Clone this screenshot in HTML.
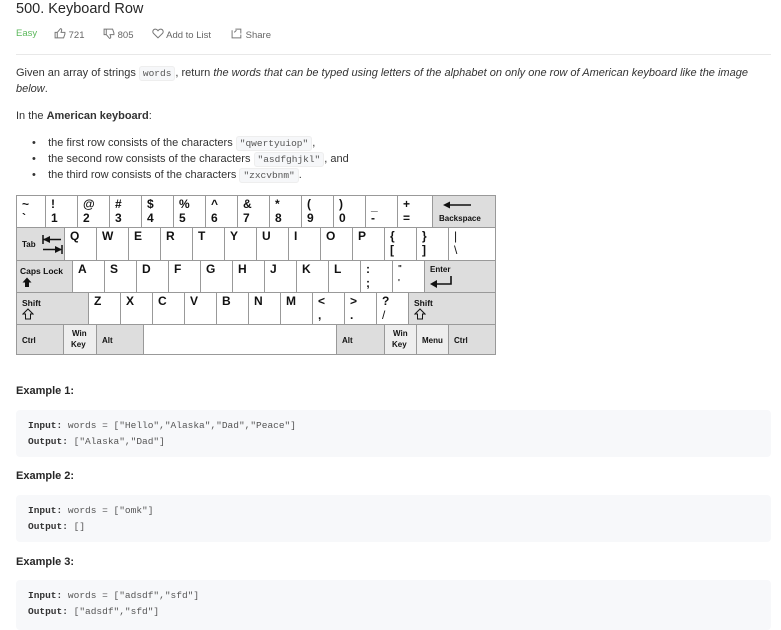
<!DOCTYPE html>
<html><head><meta charset="utf-8">
<style>
*{margin:0;padding:0;box-sizing:border-box}
body{width:781px;height:624px;overflow:hidden;background:#fff;font-family:"Liberation Sans","DejaVu Sans",sans-serif;color:#262626;position:relative}
.a{position:absolute;white-space:nowrap}
.t{font-size:11px;color:#333}
code{font-family:"Liberation Mono",monospace;font-size:9.5px;background:#f6f7f9;border:1px solid #eee;border-radius:3px;padding:1px 3px;color:#555}
.kb{position:absolute;left:16px;top:195px;width:480px;height:160px;background:#fff;border-top:1px solid #999;border-left:1px solid #999}
.k{position:absolute;border-right:1px solid #999;border-bottom:1px solid #999;background:#fff;font-family:"Liberation Sans",sans-serif;font-weight:bold;font-size:12px;color:#111;line-height:12px}
.g{background:#ddd}
.lg{background:#eee}
.k span{position:absolute;left:5px}
.u{top:2px}.d{top:16px}
.s{font-size:8px}
.code{position:absolute;left:16px;width:755px;background:#f7f8fa;border-radius:4px;font-family:"Liberation Mono",monospace;font-size:9.5px;color:#555;line-height:16px;padding:8px 12px}
.code b{color:#333}
.h{position:absolute;left:16px;font-size:11px;font-weight:bold;color:#262626}
.m{font-size:9.5px;color:#666;top:28px}
</style></head><body>
<div class="a" style="left:16px;top:1px;font-size:14.5px;color:#262626">500. Keyboard Row</div>
<div class="a m" style="left:16px;color:#5cb85c">Easy</div>
<div class="a m" style="left:54px">
<svg width="12" height="11" viewBox="0 0 11 10" style="vertical-align:-1px"><path d="M1 4h2v5H1zM3 4l3-3.5c1 0 1.2.8 1 1.8L6.5 4H10v1.5L8.8 9H3" fill="none" stroke="#777" stroke-width=".9"/></svg> 721</div>
<div class="a m" style="left:103px">
<svg width="12" height="11" viewBox="0 0 11 10" style="vertical-align:-1px"><path d="M1 1h2v5H1zM3 6l3 3.5c1 0 1.2-.8 1-1.8L6.5 6H10V4.5L8.8 1H3" fill="none" stroke="#777" stroke-width=".9"/></svg> 805</div>
<div class="a m" style="left:152px">
<svg width="12" height="11" viewBox="0 0 11 10" style="vertical-align:-1px"><path d="M5.5 9L1.5 5C0 3.5 1 1 3 1c1.2 0 2 .8 2.5 1.5C6 1.8 6.8 1 8 1c2 0 3 2.5 1.5 4z" fill="none" stroke="#777" stroke-width=".9"/></svg> Add to List</div>
<div class="a m" style="left:231px">
<svg width="12" height="11" viewBox="0 0 11 10" style="vertical-align:-1px"><path d="M1 2v7h8V6M4 1h5v4M3 4l2-2" fill="none" stroke="#777" stroke-width=".9"/></svg> Share</div>
<div class="a" style="left:16px;top:54px;width:755px;height:1px;background:#e8e8e8"></div>

<div class="a t" style="left:16px;top:67px">Given an array of strings <code>words</code>, return <i>the words that can be typed using letters of the alphabet on only one row of American keyboard like the image</i></div>
<div class="a t" style="left:16px;top:83px"><i>below</i>.</div>
<div class="a t" style="left:16px;top:110px">In the <b>American keyboard</b>:</div>
<div class="a t" style="left:32px;top:137px">•&nbsp;&nbsp;&nbsp; the first row consists of the characters <code>"qwertyuiop"</code>,</div>
<div class="a t" style="left:32px;top:153px">•&nbsp;&nbsp;&nbsp; the second row consists of the characters <code>"asdfghjkl"</code>, and</div>
<div class="a t" style="left:32px;top:169px">•&nbsp;&nbsp;&nbsp; the third row consists of the characters <code>"zxcvbnm"</code>.</div>

<div class="kb">
<div class="k" style="left:0;top:0;width:29px;height:32px"><span class="u">~</span><span class="d">`</span></div>
<div class="k" style="left:29px;top:0;width:32px;height:32px"><span class="u">!</span><span class="d">1</span></div>
<div class="k" style="left:61px;top:0;width:32px;height:32px"><span class="u">@</span><span class="d">2</span></div>
<div class="k" style="left:93px;top:0;width:32px;height:32px"><span class="u">#</span><span class="d">3</span></div>
<div class="k" style="left:125px;top:0;width:32px;height:32px"><span class="u">$</span><span class="d">4</span></div>
<div class="k" style="left:157px;top:0;width:32px;height:32px"><span class="u">%</span><span class="d">5</span></div>
<div class="k" style="left:189px;top:0;width:32px;height:32px"><span class="u">^</span><span class="d">6</span></div>
<div class="k" style="left:221px;top:0;width:32px;height:32px"><span class="u">&amp;</span><span class="d">7</span></div>
<div class="k" style="left:253px;top:0;width:32px;height:32px"><span class="u">*</span><span class="d">8</span></div>
<div class="k" style="left:285px;top:0;width:32px;height:32px"><span class="u">(</span><span class="d">9</span></div>
<div class="k" style="left:317px;top:0;width:32px;height:32px"><span class="u">)</span><span class="d">0</span></div>
<div class="k" style="left:349px;top:0;width:32px;height:32px"><span class="u" style="top:4px">_</span><span class="d">-</span></div>
<div class="k" style="left:381px;top:0;width:35px;height:32px"><span class="u">+</span><span class="d">=</span></div>
<div class="k g" style="left:416px;top:0;width:63px;height:32px"><svg style="position:absolute;left:10px;top:5px" width="30" height="8"><path d="M2 4H28" stroke="#111" stroke-width="1.6"/><path d="M0 4l7-3.5v7z" fill="#111"/></svg><span class="s" style="top:17px;left:6px">Backspace</span></div>

<div class="k g" style="left:0;top:32px;width:48px;height:33px"><span class="s" style="top:11px">Tab</span><svg style="position:absolute;left:24px;top:5px" width="24" height="22"><path d="M2 2v9M2 6.5H20" stroke="#111" stroke-width="1.5"/><path d="M2 6.5l7-3.5v7z" fill="#111"/><path d="M21 12v9M2 16.5H20" stroke="#111" stroke-width="1.5"/><path d="M21 16.5l-7-3.5v7z" fill="#111"/></svg></div>
<div class="k" style="left:48px;top:32px;width:32px;height:33px"><span class="u">Q</span></div>
<div class="k" style="left:80px;top:32px;width:32px;height:33px"><span class="u">W</span></div>
<div class="k" style="left:112px;top:32px;width:32px;height:33px"><span class="u">E</span></div>
<div class="k" style="left:144px;top:32px;width:32px;height:33px"><span class="u">R</span></div>
<div class="k" style="left:176px;top:32px;width:32px;height:33px"><span class="u">T</span></div>
<div class="k" style="left:208px;top:32px;width:32px;height:33px"><span class="u">Y</span></div>
<div class="k" style="left:240px;top:32px;width:32px;height:33px"><span class="u">U</span></div>
<div class="k" style="left:272px;top:32px;width:32px;height:33px"><span class="u">I</span></div>
<div class="k" style="left:304px;top:32px;width:32px;height:33px"><span class="u">O</span></div>
<div class="k" style="left:336px;top:32px;width:32px;height:33px"><span class="u">P</span></div>
<div class="k" style="left:368px;top:32px;width:32px;height:33px"><span class="u">{</span><span class="d">[</span></div>
<div class="k" style="left:400px;top:32px;width:32px;height:33px"><span class="u">}</span><span class="d">]</span></div>
<div class="k" style="left:432px;top:32px;width:47px;height:33px"><span class="u" style="font-weight:normal">|</span><span class="d" style="font-weight:normal">\</span></div>

<div class="k g" style="left:0;top:65px;width:56px;height:32px"><span class="s" style="top:4px;left:3px;font-size:8.5px">Caps Lock</span><svg style="position:absolute;left:5px;top:16px" width="10" height="11"><path d="M5 0.5L9.5 5.5H7V10H3V5.5H0.5z" fill="#111"/></svg></div>
<div class="k" style="left:56px;top:65px;width:32px;height:32px"><span class="u">A</span></div>
<div class="k" style="left:88px;top:65px;width:32px;height:32px"><span class="u">S</span></div>
<div class="k" style="left:120px;top:65px;width:32px;height:32px"><span class="u">D</span></div>
<div class="k" style="left:152px;top:65px;width:32px;height:32px"><span class="u">F</span></div>
<div class="k" style="left:184px;top:65px;width:32px;height:32px"><span class="u">G</span></div>
<div class="k" style="left:216px;top:65px;width:32px;height:32px"><span class="u">H</span></div>
<div class="k" style="left:248px;top:65px;width:32px;height:32px"><span class="u">J</span></div>
<div class="k" style="left:280px;top:65px;width:32px;height:32px"><span class="u">K</span></div>
<div class="k" style="left:312px;top:65px;width:32px;height:32px"><span class="u">L</span></div>
<div class="k" style="left:344px;top:65px;width:32px;height:32px"><span class="u">:</span><span class="d">;</span></div>
<div class="k" style="left:376px;top:65px;width:32px;height:32px"><span class="u s">"</span><span class="d s">'</span></div>
<div class="k g" style="left:408px;top:65px;width:71px;height:32px"><span class="s" style="top:3px">Enter</span><svg style="position:absolute;left:5px;top:14px" width="24" height="14"><path d="M21 1v8H4" stroke="#111" stroke-width="1.6" fill="none"/><path d="M0 9l7-4v8z" fill="#111"/></svg></div>

<div class="k g" style="left:0;top:97px;width:72px;height:32px"><span class="s" style="top:4px;font-size:8.5px">Shift</span><svg style="position:absolute;left:5px;top:15px" width="12" height="12"><path d="M6 1L11 6H8.5V11H3.5V6H1z" fill="none" stroke="#111" stroke-width="1"/></svg></div>
<div class="k" style="left:72px;top:97px;width:32px;height:32px"><span class="u">Z</span></div>
<div class="k" style="left:104px;top:97px;width:32px;height:32px"><span class="u">X</span></div>
<div class="k" style="left:136px;top:97px;width:32px;height:32px"><span class="u">C</span></div>
<div class="k" style="left:168px;top:97px;width:32px;height:32px"><span class="u">V</span></div>
<div class="k" style="left:200px;top:97px;width:32px;height:32px"><span class="u">B</span></div>
<div class="k" style="left:232px;top:97px;width:32px;height:32px"><span class="u">N</span></div>
<div class="k" style="left:264px;top:97px;width:32px;height:32px"><span class="u">M</span></div>
<div class="k" style="left:296px;top:97px;width:32px;height:32px"><span class="u">&lt;</span><span class="d">,</span></div>
<div class="k" style="left:328px;top:97px;width:32px;height:32px"><span class="u">&gt;</span><span class="d">.</span></div>
<div class="k" style="left:360px;top:97px;width:32px;height:32px"><span class="u">?</span><span class="d" style="font-weight:normal">/</span></div>
<div class="k g" style="left:392px;top:97px;width:87px;height:32px"><span class="s" style="top:4px;font-size:8.5px">Shift</span><svg style="position:absolute;left:5px;top:15px" width="12" height="12"><path d="M6 1L11 6H8.5V11H3.5V6H1z" fill="none" stroke="#111" stroke-width="1"/></svg></div>

<div class="k g" style="left:0;top:129px;width:47px;height:30px"><span class="s" style="top:10px">Ctrl</span></div>
<div class="k lg" style="left:47px;top:129px;width:33px;height:30px"><span class="s" style="top:3px;left:8px">Win</span><span class="s" style="top:14px;left:7px">Key</span></div>
<div class="k g" style="left:80px;top:129px;width:47px;height:30px"><span class="s" style="top:10px">Alt</span></div>
<div class="k" style="left:127px;top:129px;width:193px;height:30px"></div>
<div class="k g" style="left:320px;top:129px;width:48px;height:30px"><span class="s" style="top:10px">Alt</span></div>
<div class="k lg" style="left:368px;top:129px;width:32px;height:30px"><span class="s" style="top:3px;left:8px">Win</span><span class="s" style="top:14px;left:7px">Key</span></div>
<div class="k lg" style="left:400px;top:129px;width:32px;height:30px"><span class="s" style="top:10px">Menu</span></div>
<div class="k g" style="left:432px;top:129px;width:47px;height:30px"><span class="s" style="top:10px">Ctrl</span></div>
</div>

<div class="h" style="top:385px">Example 1:</div>
<div class="code" style="top:410px;height:47px"><b>Input:</b> words = ["Hello","Alaska","Dad","Peace"]<br><b>Output:</b> ["Alaska","Dad"]</div>
<div class="h" style="top:470px">Example 2:</div>
<div class="code" style="top:495px;height:47px"><b>Input:</b> words = ["omk"]<br><b>Output:</b> []</div>
<div class="h" style="top:556px">Example 3:</div>
<div class="code" style="top:580px;height:50px"><b>Input:</b> words = ["adsdf","sfd"]<br><b>Output:</b> ["adsdf","sfd"]</div>
</body></html>
